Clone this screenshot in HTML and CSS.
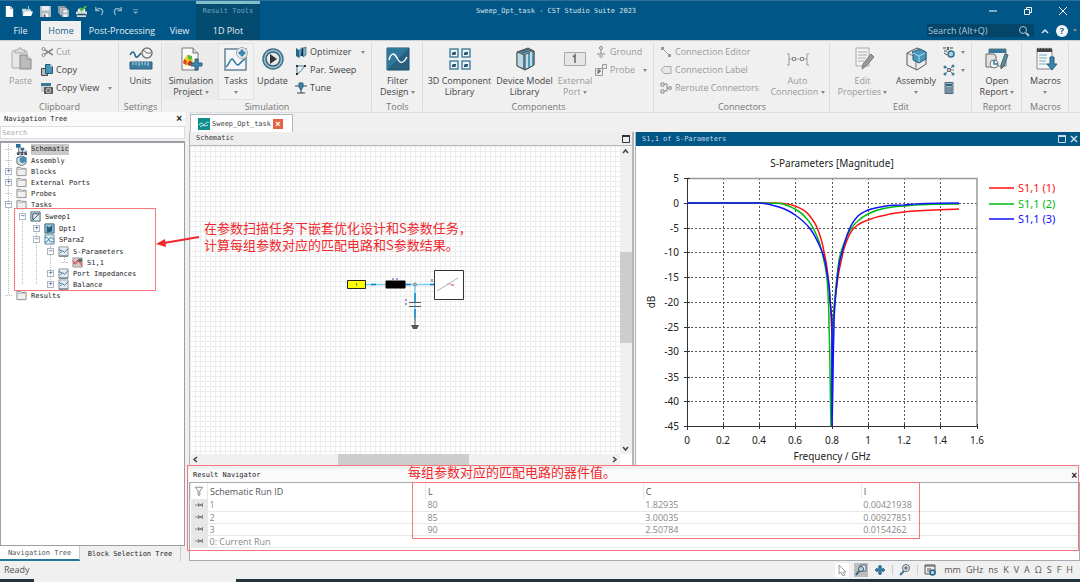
FILE: index.html
```html
<!DOCTYPE html>
<html lang="en">
  <head>
    <meta charset="UTF-8" />
    <meta name="viewport" content="width=device-width, initial-scale=1.0" />
    <title>Sweep_Opt_task - CST Studio Suite 2023</title>
    <link rel="stylesheet" href="styles.css">
  </head>
  <body>
    <svg class="sprites" aria-hidden="true">
      <symbol id="folder" viewBox="0 0 12 12">
        <path d="M1 10.500V1.500h4l1 1h5v8z" fill="#f0f0f0" stroke="#8a8a8a" />
        <path d="M1.500 3.500h9" stroke="#aaa" />
      </symbol>
      <symbol id="plot" viewBox="0 0 12 12">
        <path d="M1 1h10v10H1z" fill="#e4eaee" stroke="#8796a0" />
        <path d="M2 8l3-3 2 2 4-4M1 4l3 1" fill="none" stroke="#286f98" />
        <path d="M1 11h10" stroke="#4d6372" />
      </symbol>
      <symbol id="pin" viewBox="0 0 12 10">
        <path d="M2 5h3" stroke="#888" />
        <path d="M5 3h1v1h3V3h1v4H9V6H6v1H5z" fill="#888" />
      </symbol>
      <symbol id="chevron" viewBox="0 0 11 11">
        <path d="M4 3l3 2.500L4 8" fill="none" stroke="#444" stroke-width="1.500" />
      </symbol>
    </svg>

    <header class="app-header">
      <div class="title-row">
        <div class="quick-access">
          <button aria-label="New"><svg viewBox="0 0 12 12"><path d="M2 0h5l3 3v9H2z" fill="#fff" /><path d="M7 0v3h3" fill="none" stroke="#8aa" /></svg></button>
          <button aria-label="Open"><svg viewBox="0 0 12 12"><path d="M0 3h4l1 1h5v7H1z" fill="#c9d4da" /><path d="M3 6h9l-2 5H1z" fill="#fff" /><path d="M7 0v5M5 3l2 2 2-2" fill="none" stroke="#9ed4ec" /></svg></button>
          <button aria-label="Save"><svg viewBox="0 0 12 12"><path d="M0 0h12v12H0z" fill="#aebbc3" /><path d="M2 0h8v5H2z" fill="#e9edef" /><path d="M3 8h6v4H3z" fill="#f5f5f5" /><path d="M4 9h2v3H4z" fill="#667" /></svg></button>
          <button aria-label="Save all"><svg viewBox="0 0 12 12"><path d="M0 0h8v8H0z" fill="#8d9da7" /><path d="M2 2h8v8H2z" fill="#c9d1d6" stroke="#60717c" stroke-width=".5" /><path d="M4 4h8v8H4z" fill="#aebbc3" stroke="#60717c" stroke-width=".5" /><path d="M6 4h4v3H6zM6 9h4v3H6z" fill="#eee" /></svg></button>
          <button aria-label="Check"><svg viewBox="0 0 12 12"><path d="M2 3h8v4H2z" fill="#eee" /><path d="M0 6h12v3H0zM1 10h10v2H1z" fill="#d5dde1" /><path d="M2 9h8" stroke="#334" /><path d="M4 2l2 3 5-5" fill="none" stroke="#54b948" stroke-width="2" /></svg></button>
          <button aria-label="Undo"><svg viewBox="0 0 12 12"><path d="M2 1v4h4M2 5c4-5 10-1 6 5" fill="none" stroke="#8bb3ca" stroke-width="1.500" /></svg></button>
          <button aria-label="Redo"><svg viewBox="0 0 12 12"><path d="M10 1v4H6M10 5C6 0 0 4 4 10" fill="none" stroke="#8bb3ca" stroke-width="1.500" /></svg></button>
          <button class="narrow" aria-label="Customize"><svg viewBox="0 0 12 12"><path d="M3 4h6" stroke="#6fa0bd" /><path d="M3 6h6L6 9z" fill="#6fa0bd" /></svg></button>
        </div>
        <div class="context-label">Result Tools</div>
        <div class="window-title">Sweep_Opt_task - CST Studio Suite 2023</div>
        <div class="window-controls">
          <button aria-label="Minimize"><svg viewBox="0 0 12 12"><path d="M2 6h8" stroke="#fff" /></svg></button>
          <button aria-label="Restore"><svg viewBox="0 0 12 12"><path d="M2.500 4.500h5v5h-5zM4.500 4V2.500h5v5H8" fill="none" stroke="#fff" /></svg></button>
          <button aria-label="Close"><svg viewBox="0 0 12 12"><path d="M2 2l8 8M10 2l-8 8" stroke="#fff" /></svg></button>
        </div>
      </div>
      <div class="tab-row">
        <nav class="ribbon-tabs">
          <button>File</button>
          <button class="active">Home</button>
          <button>Post-Processing</button>
          <button>View</button>
          <button class="context">1D Plot</button>
        </nav>
        <div class="header-tools">
          <div class="ribbon-search">
            <input type="text" placeholder="Search (Alt+Q)" aria-label="Search commands" />
            <svg viewBox="0 0 12 12"><circle cx="5" cy="5" r="3.500" fill="none" stroke="#a9c4d3" /><path d="M8 8l3 3" stroke="#a9c4d3" stroke-width="2" /></svg>
          </div>
          <button aria-label="Collapse ribbon"><svg viewBox="0 0 12 12"><path d="M3 8l3-3 3 3" fill="none" stroke="#dbe7ee" stroke-width="1.500" /></svg></button>
          <button class="help" aria-label="Help">?</button>
          <i class="arrow"></i>
        </div>
      </div>
    </header>

    <div class="ribbon">
      <section class="group clipboard">
        <div class="group-body">
          <button class="big disabled">
            <svg viewBox="0 0 24 24"><rect x="3" y="4" width="15" height="17" rx="1" fill="#e6e6e6" stroke="#aaa" /><path d="M6 6V3h3l1-2h2l1 2h3v3z" fill="#ddd" stroke="#aaa" /><path d="M11 8h7l4 4v10H11z" fill="#bbb" stroke="#888" /><path d="M18 8v4h4" fill="#eee" stroke="#888" /></svg>
            <span>Paste</span>
          </button>
          <div class="stack">
            <button class="small disabled"><svg viewBox="0 0 12 12"><circle cx="2.500" cy="3" r="1.500" fill="none" stroke="#888" /><circle cx="2.500" cy="9" r="1.500" fill="none" stroke="#888" /><path d="M4 4l8 5M4 8l8-5" stroke="#888" stroke-width="1.500" /></svg>Cut</button>
            <button class="small"><svg viewBox="0 0 12 12"><path d="M.5 4.500h6v7h-6z" fill="#bbb" stroke="#444" /><path d="M4.500.5h5l2 2v7h-7z" fill="#4794b8" stroke="#235a78" /><path d="M9 0v3h3" fill="#def" stroke="#235a78" stroke-width=".5" /></svg>Copy</button>
            <button class="small"><svg viewBox="0 0 12 12"><path d="M0 1h10v9H0z" fill="#c9d2d7" /><path d="M0 1h10v3H0z" fill="#3e7898" /><rect x="3" y="5" width="9" height="7" rx="1" fill="#555" /><circle cx="7.500" cy="8.500" r="2.500" fill="#777" stroke="#ddd" stroke-width=".8" /></svg>Copy View<i class="arrow"></i></button>
          </div>
        </div>
        <h2>Clipboard</h2>
      </section>

      <section class="group settings">
        <div class="group-body">
          <button class="big">
            <svg viewBox="0 0 24 24"><path d="M1 8c2-4 4-4 5 0s3 2 6-2" fill="none" stroke="#246285" stroke-width="1.500" /><circle cx="18" cy="6" r="5" fill="#f5f5f5" stroke="#777" stroke-width="1.500" /><path d="M14 3l4 3h4" fill="none" stroke="#666" /><path d="M1 15h22v7H1z" fill="#3b7c9f" stroke="#286080" /><path d="M4 15v3M7 15v3M10 15v4M13 15v3M16 15v3M19 15v4" stroke="#b9dbe9" /></svg>
            <span>Units</span>
          </button>
        </div>
        <h2>Settings</h2>
      </section>

      <section class="group simulation">
        <div class="group-body">
          <button class="big shaded">
            <svg viewBox="0 0 24 24"><path d="M3 1h11l5 5v17H3z" fill="#fafafa" stroke="#777" /><path d="M14 1v5h5" fill="#ddd" stroke="#777" /><path d="M5 12l4-4 4 1 1 6-3 4-5-1z" fill="#f1d21c" /><path d="M5 12l3 2-1 4-3-2z" fill="#e1431c" /><path d="M8 8l5 1v3l-3 1z" fill="#52b848" /><path d="M11 13l3 3-3 3-3-2z" fill="#d73324" /><path d="M16 12h3v4h4v3h-4v4h-3v-4h-4v-3h4z" fill="#3c89ad" stroke="#245e7c" /></svg>
            <span>Simulation<br />Project <i class="arrow"></i></span>
          </button>
          <button class="big boxed">
            <svg viewBox="0 0 24 24"><path d="M1 2h21v21H1z" fill="#f2f6f8" stroke="#668392" stroke-width="1.500" /><path d="M2 20c3-2 4-8 6-8s4 7 6 6 3-4 7-6" fill="none" stroke="#31759a" stroke-width="1.500" /><circle cx="18" cy="6" r="5.500" fill="#eee" stroke="#aaa" /><path d="M17 3h2v2h2v2h-2v2h-2V7h-2V5h2z" fill="#3884aa" stroke="#3884aa" /></svg>
            <span>Tasks<br /><i class="arrow"></i></span>
          </button>
          <button class="big">
            <svg viewBox="0 0 24 24"><circle cx="12" cy="12" r="10" fill="#aebdc5" stroke="#3a7595" stroke-width="1.500" /><circle cx="12" cy="12" r="7" fill="#e8e8e8" stroke="#2d647f" stroke-width="1.500" /><path d="M9 7l7 5-7 5z" fill="#333" /></svg>
            <span>Update</span>
          </button>
          <div class="stack">
            <button class="small"><svg viewBox="0 0 12 12"><path d="M1 2l3 2v8l-3-2z" fill="#286485" /><path d="M4 4l3-3v8l-3 3z" fill="#4e9fc4" /><path d="M7 1l1 2v7H6z" fill="#225" /><path d="M8 2l3-1v8l-3 2z" fill="#78b6d1" stroke="#333" stroke-width=".5" /></svg>Optimizer<i class="arrow"></i></button>
            <button class="small"><svg viewBox="0 0 12 12"><path d="M2 11V2h8L2 11" fill="none" stroke="#497b94" /><path d="M1 1h2v2H1zM9 1h2v2H9zM1 9h2v2H1z" fill="#234" /></svg>Par. Sweep</button>
            <button class="small"><svg viewBox="0 0 12 12"><path d="M0 4h4M8 4h4M2 11h8M6 7v4" stroke="#345" /><path d="M4 1h4v4L6 8 4 5z" fill="#3d89ae" stroke="#245e7c" /></svg>Tune</button>
          </div>
        </div>
        <h2>Simulation</h2>
      </section>

      <section class="group tools">
        <div class="group-body">
          <button class="big">
            <svg viewBox="0 0 24 24"><path d="M1 1h22v22H1z" fill="#27617f" stroke="#18506e" /><path d="M1 1h22L1 23z" fill="#31799c" /><path d="M3 13c2-7 5-8 8-2s6 6 10-1" fill="none" stroke="#fff" stroke-width="1.500" /></svg>
            <span>Filter<br />Design <i class="arrow"></i></span>
          </button>
        </div>
        <h2>Tools</h2>
      </section>

      <section class="group components">
        <div class="group-body">
          <button class="big">
            <svg viewBox="0 0 24 24"><path d="M2 2h8v8H2zM14 2h8v8h-8zM2 14h8v8H2zM14 14h8v8h-8z" fill="#e9f2f5" stroke="#4a839f" stroke-width="1.500" /><path d="M5 5h3v2l-1 1H4V6zM17 5h3v2l-1 1h-3V6zM5 17h3v2l-1 1H4v-2zM17 17h3v2l-1 1h-3v-2z" fill="#285a73" /></svg>
            <span>3D Component<br />Library</span>
          </button>
          <button class="big">
            <svg viewBox="0 0 24 24"><path d="M4 5l11-4 6 3v14l-9 5-8-4z" fill="#65a8c5" stroke="#555" /><path d="M4 5l7 3v14l-7-3z" fill="#b9d9e6" stroke="#555" /><path d="M11 8l10-4v14l-9 5-1-1z" fill="#529abc" stroke="#555" /><path d="M14 7v14M18 5v14" stroke="#eee" stroke-width="1.500" /><path d="M6 5l10-3M9 6l10-3" stroke="#444" /></svg>
            <span>Device Model<br />Library</span>
          </button>
          <button class="big disabled">
            <svg viewBox="0 0 24 24"><path d="M1.500 5.500h21v13h-21z" fill="#e6e6e6" stroke="#aaa" /><path d="M10 10l2-2v8" fill="none" stroke="#666" stroke-width="1.500" /></svg>
            <span>External<br />Port <i class="arrow"></i></span>
          </button>
          <div class="stack">
            <button class="small disabled"><svg viewBox="0 0 12 12"><circle cx="6" cy="2" r="1.500" fill="none" stroke="#888" /><path d="M6 4v4M2 8h8M4 10h4M5 12h2" stroke="#888" /></svg>Ground</button>
            <button class="small disabled"><svg viewBox="0 0 12 12"><path d="M.5 4.500h7v7h-7zM7.500.5h4v4h-4z" fill="#eee" stroke="#999" /><path d="M3 10V6h2v2H3" fill="none" stroke="#555" /></svg>Probe<i class="arrow"></i></button>
          </div>
        </div>
        <h2>Components</h2>
      </section>

      <section class="group connectors">
        <div class="group-body">
          <div class="stack">
            <button class="small disabled"><svg viewBox="0 0 12 12"><path d="M2 2l7 7" stroke="#999" /><path d="M1 1h3v3H1zM8 8h3v3H8z" fill="#999" /></svg>Connection Editor</button>
            <button class="small disabled"><svg viewBox="0 0 12 12"><path d="M1 6l3-3.500h7v7H4z" fill="#e8e8e8" stroke="#aaa" /></svg>Connection Label</button>
            <button class="small disabled"><svg viewBox="0 0 12 12"><path d="M1 1h3v3H1zM1 8h3v3H1z" fill="none" stroke="#888" /><path d="M4 2h3v7H4M7 6h2" fill="none" stroke="#888" /><circle cx="10" cy="6" r="1.500" fill="none" stroke="#888" /></svg>Reroute Connectors</button>
          </div>
          <button class="big disabled">
            <svg viewBox="0 0 24 24"><path d="M1 7h2v11H1M23 7h-2v11h2M3 12h3M10 12h4M18 12h3" fill="none" stroke="#999" /><path d="M6.500 10.500h3v3h-3zM14.500 10.500h3v3h-3z" fill="#eee" stroke="#888" /></svg>
            <span>Auto<br />Connection <i class="arrow"></i></span>
          </button>
        </div>
        <h2>Connectors</h2>
      </section>

      <section class="group edit">
        <div class="group-body">
          <button class="big disabled">
            <svg viewBox="0 0 24 24"><path d="M5 1h13v18H5z" fill="#f3f3f3" stroke="#aaa" /><path d="M7 5h9M7 8h9M7 11h8M7 14h6" stroke="#aaa" /><path d="M20 7l3 3-8 9-4 3 1-5z" fill="#999" stroke="#777" /></svg>
            <span>Edit<br />Properties <i class="arrow"></i></span>
          </button>
          <button class="big">
            <svg viewBox="0 0 24 24"><path d="M3 6l10-5 9 4v12l-9 6-10-5z" fill="#ededed" stroke="#555" /><path d="M3 6l9 4v13" fill="none" stroke="#777" /><path d="M8 5l8-3 6 3v7l-7 4-6-3V6z" fill="#4894ba" stroke="#28617f" /><path d="M9 6l6 3v6M15 9l6-3" fill="none" stroke="#b4dbed" /></svg>
            <span>Assembly<br /><i class="arrow"></i></span>
          </button>
          <div class="stack">
            <button class="small" aria-label="Parameters"><svg viewBox="0 0 12 12"><path d="M0 2h3M4 1l2 3M6 1L4 4M7 2h3M1 5h3" stroke="#444" /><path d="M1 7l3 2" stroke="#444" /><circle cx="8" cy="8" r="3" fill="#a9d3e6" stroke="#2f6d8d" stroke-width="1.500" /></svg><i class="arrow"></i></button>
            <button class="small" aria-label="Network"><svg viewBox="0 0 12 12"><path d="M2 2l8 8M10 2l-8 8M6 6h5" stroke="#555" stroke-width=".75" /><circle cx="2" cy="3" r="1.500" fill="#357b9f" /><circle cx="10" cy="2" r="1.500" fill="#357b9f" /><circle cx="2" cy="10" r="1.500" fill="#357b9f" /><circle cx="10" cy="10" r="1.500" fill="#357b9f" /><circle cx="6" cy="6" r="1.500" fill="#eee" stroke="#555" /></svg><i class="arrow"></i></button>
            <button class="small" aria-label="Calculator"><svg viewBox="0 0 12 12"><path d="M2 .5h8v11H2z" fill="#9fb5c1" stroke="#567" /><path d="M3 2h6v2H3z" fill="#286485" /><path d="M3 6h6M3 8h6M3 10h6" stroke="#234e66" stroke-dasharray="1.500 .75" /></svg></button>
          </div>
        </div>
        <h2>Edit</h2>
      </section>

      <section class="group report">
        <div class="group-body">
          <button class="big">
            <svg viewBox="0 0 24 24"><path d="M4 2h17v17H4z" fill="#eee" stroke="#777" /><path d="M4 2h17v4H4z" fill="#387899" /><path d="M1 7h8l2 2v11H1z" fill="#e2e2e2" stroke="#666" /><circle cx="9" cy="17" r="4" fill="#f5f5f5" stroke="#777" /><path d="M9 13v4h4" fill="none" stroke="#357b9f" stroke-width="1.500" /><path d="M20 7l3 1-4 11-3 3v-4z" fill="#4b95b8" stroke="#555" /></svg>
            <span>Open<br />Report <i class="arrow"></i></span>
          </button>
        </div>
        <h2>Report</h2>
      </section>

      <section class="group macros">
        <div class="group-body">
          <button class="big">
            <svg viewBox="0 0 24 24"><path d="M3 2h15v20H3z" fill="#f7f7f7" stroke="#888" /><path d="M3 1h15v4H3z" fill="#444" /><path d="M5 0v2M8 0v2M11 0v2M14 0v2M17 0v2" stroke="#ccc" /><path d="M5 8h8M5 11h8M5 14h7M5 17h8" stroke="#76a9c0" /><path d="M16 10h4v7h3l-5 6-5-6h3z" fill="#3884aa" stroke="#245e7c" /></svg>
            <span>Macros<br /><i class="arrow"></i></span>
          </button>
        </div>
        <h2>Macros</h2>
      </section>
    </div>

    <main>
      <aside class="navigation">
        <div class="panel-header">Navigation Tree<button class="close" aria-label="Close navigation tree">×</button></div>
        <input class="tree-search" type="text" placeholder="Search" aria-label="Search tree" />
        <div class="tree">
          <ul>
            <li><div class="node"><i></i><svg viewBox="0 0 12 12"><path d="M0 0h5v4H0zM5 4h4v3H5z" fill="#286f98" /><path d="M3 4v5h8V7M7 7v3" fill="none" stroke="#555" /><path d="M1 9h3v3H1zM5 9h3v3H5zM9 9h3v3H9z" fill="#456" /></svg><span class="selected">Schematic</span></div></li>
            <li><div class="node"><i></i><svg viewBox="0 0 12 12"><path d="M1 3l5-2 5 2v6l-5 3-5-3z" fill="#ddd" stroke="#567" /><path d="M4 3l4-1 3 1v4L7 9 4 7z" fill="#3e8eb5" /></svg>Assembly</div></li>
            <li><div class="node"><button class="toggle" aria-label="Expand">+</button><svg><use href="#folder" /></svg>Blocks</div></li>
            <li><div class="node"><button class="toggle" aria-label="Expand">+</button><svg><use href="#folder" /></svg>External Ports</div></li>
            <li><div class="node"><i></i><svg><use href="#folder" /></svg>Probes</div></li>
            <li>
              <div class="node"><button class="toggle" aria-label="Collapse">−</button><svg><use href="#folder" /></svg>Tasks</div>
              <ul>
                <li>
                  <div class="node"><button class="toggle" aria-label="Collapse">−</button><svg viewBox="0 0 12 12"><path d="M1 1h10v10H1z" fill="#e4eef3" stroke="#2b5971" /><path d="M3 10V3h7L3 10" fill="none" stroke="#345" /></svg>Sweep1</div>
                  <ul>
                    <li><div class="node"><button class="toggle" aria-label="Expand">+</button><svg viewBox="0 0 12 12"><path d="M1 1h10v10H1z" fill="#a6cadb" stroke="#2b5971" /><path d="M3 3l3 2 3-3v7l-6 2z" fill="#245e7c" /></svg>Opt1</div></li>
                    <li>
                      <div class="node"><button class="toggle" aria-label="Collapse">−</button><svg viewBox="0 0 12 12"><path d="M1 1h10v10H1z" fill="#e4eef3" stroke="#5389a3" /><path d="M1 4c4-3 4 8 10 4M1 9c4 1 4-9 10-3" fill="none" stroke="#286f98" /></svg>SPara2</div>
                      <ul>
                        <li>
                          <div class="node"><button class="toggle" aria-label="Collapse">−</button><svg><use href="#plot" /></svg>S-Parameters</div>
                          <ul class="flush">
                            <li><div class="node"><i></i><svg viewBox="0 0 12 12"><path d="M1 1h10v10H1z" fill="#d9cccc" stroke="#999" /><path d="M1 4l3 4 3-4 4 6M1 8l6-5 4 4" fill="none" stroke="#d23c35" /><path d="M7 2h4v3H7z" fill="#466" /></svg>S1,1</div></li>
                          </ul>
                        </li>
                        <li><div class="node"><button class="toggle" aria-label="Expand">+</button><svg><use href="#plot" /></svg>Port Impedances</div></li>
                        <li><div class="node"><button class="toggle" aria-label="Expand">+</button><svg><use href="#plot" /></svg>Balance</div></li>
                      </ul>
                    </li>
                  </ul>
                </li>
              </ul>
            </li>
            <li><div class="node"><i></i><svg><use href="#folder" /></svg>Results</div></li>
          </ul>
        </div>
        <div class="bottom-tabs">
          <button class="active">Navigation Tree</button>
          <button>Block Selection Tree</button>
        </div>
      </aside>

      <div class="content">
        <div class="document-tabs">
          <div class="document-tab">
            <svg viewBox="0 0 12 12"><path d="M0 0h12v12H0z" fill="#0c8e8c" /><path d="M1 7c3-5 4 2 6-1s3-1 4-2M2 9c3-3 4 0 8-2" fill="none" stroke="#d5f3ef" /></svg>
            Sweep_Opt_task
            <button aria-label="Close tab">×</button>
          </div>
        </div>

        <div class="windows">
          <section class="window schematic">
            <div class="window-bar">Schematic
              <svg viewBox="0 0 12 12"><path d="M2.500 3.500h7v6h-7z" fill="none" stroke="#333" /><path d="M2 3h8" stroke="#333" stroke-width="2" /></svg>
            </div>
            <div class="canvas">
              <svg class="circuit" width="430" height="308" viewBox="0 0 430 308">
                <path d="M176 138.500h68M225 138.500v36" stroke="#7fcff5" stroke-width="1.500" />
                <path d="M181 138.500h5M215 138.500h6M240 138.500h5M225 147v9M225 163v8" stroke="#0787cf" stroke-width="1.500" />
                <path d="M157.500 134.500h18v8h-18z" fill="#ff0" stroke="#222" />
                <path d="M166.500 137v3" stroke="#775" />
                <path d="M196 135h19v7h-19z" fill="#000" stroke="#000" />
                <path d="M203 132v2M206 133h2M216 153v2M216 157v2" stroke="#3636a8" />
                <path d="M219 156.500h12M219 160.500h12" stroke="#555" />
                <circle cx="225" cy="138.500" r="1.500" fill="#bbb" stroke="#789" />
                <path d="M242 136v-3" stroke="#555" />
                <path d="M225 171v8" stroke="#555" />
                <path d="M221 179h8l-2 4h-4z" fill="#555" />
                <path d="M244.500 124.500h29v29h-29z" fill="#fff" stroke="#333" />
                <path d="M247 145l21-13M257 138h4" stroke="#999" stroke-width=".75" />
                <path d="M261 139h3" stroke="#d33" />
              </svg>
            </div>
            <div class="scroll-y"><svg class="up"><use href="#chevron" /></svg><i></i><svg class="down"><use href="#chevron" /></svg></div>
            <div class="scroll-x"><svg class="left"><use href="#chevron" /></svg><i></i><svg class="right"><use href="#chevron" /></svg></div>
          </section>

          <section class="window active">
            <div class="window-bar">S1,1 of S-Parameters
              <svg viewBox="0 0 12 12"><path d="M2.500 3.500h7v6h-7z" fill="none" stroke="#cde" /><path d="M2 3h8" stroke="#cde" stroke-width="2" /></svg>
              <svg viewBox="0 0 12 12"><path d="M3 3l6 6M9 3l-6 6" stroke="#cde" stroke-width="1.500" /></svg>
            </div>
            <svg class="chart" viewBox="0 0 444 319">
              <text class="caption" x="196" y="21">S-Parameters [Magnitude]</text>
              <g class="grid">
                <path d="M87.500 32v248M123.500 32v248M159.500 32v248M196.500 32v248M232.500 32v248M268.500 32v248M304.500 32v248" />
                <path d="M51 57.500h290M51 82.500h290M51 106.500h290M51 131.500h290M51 156.500h290M51 181.500h290M51 205.500h290M51 231.500h290M51 255.500h290" />
              </g>
              <path d="M51 32.500h290v248" fill="none" stroke="#999" stroke-width="1.500" />
              <path d="M51.500 32v252M48 280.500h293" stroke="#333" />
              <path d="M48 32.500h6M48 57.500h6M48 82.500h6M48 106.500h6M48 131.500h6M48 156.500h6M48 181.500h6M48 205.500h6M48 231.500h6M48 255.500h6M87.500 278v5M123.500 278v5M159.500 278v5M196.500 278v5M232.500 278v5M268.500 278v5M304.500 278v5M341.500 278v5" stroke="#333" />
              <g class="curves">
                <path stroke="#f11" d="M51 57H132C144 57 152 57 159 60C166 63 169 64 173 69C178 75 180 78 182 84C185 92 187 99 188 106C190 114 191 121 192 130C193 141 195 160 196 190V225V190C197 170 200 145 202 131C204 118 206 113 207 106C209 99 211 92 215 86C219 79 226 76 232 74C239 71 244 70 250 69C256 67 261 67 268 66C286 64 305 64 323 63" />
                <path stroke="#0b1" d="M51 57H123C134 57 142 57 147 58C154 60 155 61 159 63C164 66 167 68 170 72C175 77 177 81 180 88C184 96 185 103 187 110C189 118 190 124 191 132C192 145 193 162 193 180C194 202 194 240 195 280C196 240 196 200 197 178C198 160 200 136 203 114C205 104 209 94 213 86C216 81 218 78 222 75C225 72 228 70 232 68C238 65 244 63 250 62C256 61 261 60 268 60C287 58 305 58 323 58" />
                <path stroke="#11f" d="M51 57H123C130 57 137 59 143 61C149 63 154 65 159 69C165 73 170 77 175 84C180 91 182 96 185 103C188 110 190 118 191 127C193 137 194 145 194 154C195 163 196 171 196 181V280C197 245 197 210 198 180C198 167 199 157 200 145C201 134 202 124 204 114C207 103 209 94 213 84C216 77 218 74 222 70C225 67 228 66 232 64C238 62 244 61 250 60C256 59 262 59 268 59C286 57 305 57 323 57" />
              </g>
              <g class="labels end">
                <text x="43" y="36">5</text><text x="43" y="61">0</text><text x="43" y="86">-5</text><text x="43" y="110">-10</text><text x="43" y="135">-15</text><text x="43" y="160">-20</text><text x="43" y="185">-25</text><text x="43" y="209">-30</text><text x="43" y="235">-35</text><text x="43" y="259">-40</text><text x="43" y="284">-45</text>
              </g>
              <g class="labels">
                <text x="51" y="298">0</text><text x="87" y="298">0.2</text><text x="123" y="298">0.4</text><text x="159" y="298">0.6</text><text x="196" y="298">0.8</text><text x="232" y="298">1</text><text x="268" y="298">1.2</text><text x="304" y="298">1.4</text><text x="341" y="298">1.6</text>
              </g>
              <text class="caption" x="196" y="314">Frequency / GHz</text>
              <text class="caption" transform="translate(19 156) rotate(-90)">dB</text>
              <g class="legend">
                <path d="M353 42h25" stroke="#f11" /><text x="382" y="46" fill="#f11">S1,1 (1)</text>
                <path d="M353 58h25" stroke="#0b1" /><text x="382" y="62" fill="#0b1">S1,1 (2)</text>
                <path d="M353 73h25" stroke="#11f" /><text x="382" y="77" fill="#11f">S1,1 (3)</text>
              </g>
            </svg>
          </section>
        </div>

        <section class="results">
          <div class="panel-header">Result Navigator<button class="close" aria-label="Close result navigator">×</button></div>
          <div class="table-area">
            <table>
              <thead>
                <tr><th class="pin"><svg viewBox="0 0 12 12"><path d="M1.500 1.500h9L7 6v5H5V6z" fill="none" stroke="#777" /></svg></th><th>Schematic Run ID</th><th>L</th><th>C</th><th>I</th></tr>
              </thead>
              <tbody>
                <tr><td class="pin"><svg><use href="#pin" /></svg></td><td>1</td><td>80</td><td>1.82935</td><td>0.00421938</td></tr>
                <tr><td class="pin"><svg><use href="#pin" /></svg></td><td>2</td><td>85</td><td>3.00035</td><td>0.00927851</td></tr>
                <tr><td class="pin"><svg><use href="#pin" /></svg></td><td>3</td><td>90</td><td>2.50784</td><td>0.0154262</td></tr>
                <tr><td class="pin"><svg><use href="#pin" /></svg></td><td>0: Current Run</td><td></td><td></td><td></td></tr>
              </tbody>
            </table>
          </div>
          <div class="mark mark-results"></div>
          <div class="mark mark-values"></div>
          <p class="note note-results" lang="zh">每组参数对应的匹配电路的器件值。</p>
        </section>
      </div>

      <div class="mark mark-tasks"></div>
      <svg class="note-arrow" viewBox="0 0 44 14"><path d="M43 3L8 9" stroke="#f0282d" stroke-width="2" /><path d="M0 10l9-5 1 8z" fill="#f0282d" /></svg>
      <p class="note note-tasks" lang="zh">在参数扫描任务下嵌套优化设计和S参数任务，<br />计算每组参数对应的匹配电路和S参数结果。</p>
    </main>

    <footer class="status-bar">
      <span class="ready">Ready</span>
      <button class="light" aria-label="Select"><svg viewBox="0 0 12 12"><path d="M3 1v9l2-2 2 4 2-1-2-3h3z" fill="#fff" stroke="#999" /></svg></button>
      <button class="pressed" aria-label="Zoom"><svg viewBox="0 0 12 12"><path d="M5 1h6v6H5z" fill="#dde7ec" stroke="#567" /><circle cx="6" cy="5" r="2.500" fill="#b5d4e2" stroke="#456" /><path d="M4 7l-3 4" stroke="#286485" stroke-width="2" /></svg></button>
      <button aria-label="Pan"><svg viewBox="0 0 12 12"><path d="M6 1l2 2H7v2h2V4l2 2-2 2V7H7v2h1l-2 2-2-2h1V7H3v1L1 6l2-2v1h2V3H4z" fill="#37789a" stroke="#37789a" /></svg></button>
      <i class="divider"></i>
      <button aria-label="Fit"><svg viewBox="0 0 12 12"><circle cx="7" cy="4" r="3.500" fill="#e8f0f4" stroke="#666" /><path d="M5 4h4M7 2v4" stroke="#456" /><path d="M5 7l-4 4" stroke="#37789a" stroke-width="2" /></svg></button>
      <i class="divider"></i>
      <button aria-label="Unit settings"><svg viewBox="0 0 12 12"><path d="M1 1h10v9H1z" fill="#eee" stroke="#555" /><path d="M1 2h10M3 5h4M3 7h3" stroke="#555" /><circle cx="8.500" cy="8.500" r="2.500" fill="#b5d4e2" stroke="#286485" stroke-width="1.500" /></svg></button>
      <span class="first-unit">mm</span><span>GHz</span><span>ns</span><span>K</span><span>V</span><span>A</span><span>Ω</span><span>S</span><span>F</span><span>H</span>
    </footer>
    <div class="taskbar"><i></i></div>
  </body>
</html>
```
FILE: styles.css
```css
* {
  box-sizing: border-box;
}
body {
  margin: 0;
  min-height: 100vh;
  display: flex;
  flex-direction: column;
  background-color: #f0f0f0;
  color: #444;
  font-family: "Open Sans", "Noto Sans", sans-serif;
  font-size: 9px;
  line-height: 12px;
}
button,
input {
  font: inherit;
  color: inherit;
  border: none;
  background: none;
  padding: 0;
  margin: 0;
}
button {
  white-space: nowrap;
}
svg {
  width: 12px;
  height: 12px;
  flex: none;
  display: block;
}
ul {
  list-style: none;
  margin: 0;
  padding: 0;
}
.sprites {
  display: none;
}
.arrow {
  border: 2px solid transparent;
  border-top: 3px solid #888;
  border-bottom: none;
  display: inline-block;
  vertical-align: middle;
}

/* header */
.app-header {
  background-color: #005686;
  color: #e6eff4;
  border-top: 1px solid #2c7199;
}
.title-row {
  display: grid;
  grid-template-columns: 196px 64px 1fr 228px;
  height: 20px;
  font: 7px/20px "DejaVu Sans Mono", monospace;
}
.quick-access {
  display: flex;
  align-items: center;
}
.quick-access button {
  width: 18px;
  display: flex;
  justify-content: center;
}
.quick-access svg {
  width: 11px;
  height: 11px;
}
.context-label {
  background-color: #044b70;
  border-top: 3px solid #83bfcb;
  color: #70a8c2;
  line-height: 15px;
  text-align: center;
}
.window-title {
  text-align: center;
  color: #d4e3ec;
}
.window-controls {
  display: flex;
  justify-content: flex-end;
}
.window-controls button {
  width: 35px;
  display: flex;
  align-items: center;
  justify-content: center;
}
.tab-row {
  display: flex;
  justify-content: space-between;
  height: 19px;
}
.ribbon-tabs {
  display: grid;
  grid-template-columns: 41px 40px 82px 33px 64px;
}
.ribbon-tabs .active {
  background-color: #f0f0f0;
  color: #145d86;
}
.ribbon-tabs .context {
  background-color: #044b70;
}
.header-tools {
  display: flex;
  align-items: center;
  gap: 5px;
  padding-right: 3px;
}
.ribbon-search {
  display: flex;
  align-items: center;
  width: 107px;
  height: 13px;
  padding: 0 4px 0 1px;
  background-color: #04456a;
}
.ribbon-search input {
  flex: 1;
  min-width: 0;
}
.ribbon-search input::placeholder {
  color: #b0c7d4;
}
.help {
  width: 12px;
  height: 12px;
  border-radius: 50%;
  background-color: #f3f7f9;
  color: #1e6088;
  font-weight: bold;
  line-height: 12px;
}

/* ribbon */
.ribbon {
  display: grid;
  grid-template-columns: 119px 43px 210px 51px 231px 176px 142px 50px 47px;
  height: 72px;
  border-top: 1px solid #c5ced3;
}
.group {
  display: flex;
  flex-direction: column;
  position: relative;
}
.group::after {
  content: "";
  position: absolute;
  right: 0;
  top: 2px;
  bottom: 2px;
  border-right: 1px solid #dadada;
}
.group h2 {
  margin: 0;
  font-size: 9px;
  font-weight: normal;
  line-height: 13px;
  color: #777;
  text-align: center;
}
.group-body {
  display: grid;
  height: 59px;
  padding-top: 2px;
}
.clipboard .group-body {
  grid-template-columns: 41px 1fr;
}
.simulation .group-body {
  grid-template-columns: 54px 36px 37px 1fr;
  padding-left: 2px;
}
.simulation .stack {
  padding-left: 4px;
}
.components .group-body {
  grid-template-columns: 69px 61px 40px 1fr;
  padding-left: 2px;
}
.connectors .group-body {
  grid-template-columns: 105px 1fr;
  padding-left: 6px;
}
.edit .group-body {
  grid-template-columns: 65px 42px 1fr;
}
.edit .stack {
  padding-left: 6px;
}
.big {
  display: flex;
  flex-direction: column;
  align-items: center;
  gap: 4px;
  padding-top: 4px;
  line-height: 11px;
  min-width: 0;
}
.big svg {
  width: 24px;
  height: 24px;
}
.shaded {
  background-color: #ebebeb;
}
.boxed {
  border: 1px solid #e2e2e2;
  padding-top: 3px;
  background-color: #f2f2f2;
}
.stack {
  display: flex;
  flex-direction: column;
}
.small {
  display: flex;
  align-items: center;
  gap: 3px;
  height: 18px;
}
.small .arrow {
  margin-left: auto;
  margin-right: 7px;
}
.disabled {
  color: #999;
}

/* main area */
main {
  flex: 1;
  display: flex;
  gap: 4px;
  position: relative;
}
.navigation {
  width: 185px;
  display: flex;
  flex-direction: column;
  font: 7px/14px "DejaVu Sans Mono", monospace;
  color: #222;
}
.panel-header {
  display: flex;
  justify-content: space-between;
  align-items: center;
  height: 14px;
  padding: 0 3px 0 4px;
  background-color: #fafafa;
}
.close {
  font: bold 10px/12px "Liberation Sans", sans-serif;
}
.tree-search {
  height: 13px;
  padding-left: 1px;
  background-color: #fff;
  border: 1px solid #ddd;
}
.tree-search::placeholder {
  color: #aaa;
}
.tree {
  flex: 1;
  margin-top: 2px;
  padding: 1px 0 0 3px;
  background-color: #fff;
  border: 1px solid #9a9fa5;
  border-top-width: 2px;
}
.tree ul {
  position: relative;
}
.tree ul::before {
  content: "";
  position: absolute;
  left: 4px;
  top: 0;
  bottom: 6px;
  border-left: 1px dotted #bbb;
}
.tree ul ul {
  margin-top: 1px;
  padding-left: 14px;
}
.tree ul ul::before {
  left: 18px;
}
.tree ul .flush {
  margin-top: 0;
}
.node {
  display: flex;
  align-items: center;
  height: 11px;
  gap: 4px;
  padding-left: 1px;
  position: relative;
}
.node > i {
  width: 7px;
  height: 1px;
  border-top: 1px dotted #bbb;
}
.node svg {
  width: 11px;
  height: 11px;
}
.toggle {
  width: 7px;
  height: 7px;
  border: 1px solid #abb6c4;
  background-color: #fff;
  color: #348;
  font-size: 7px;
  line-height: 5px;
}
.selected {
  background-color: #c9c9c9;
  line-height: 11px;
}
.bottom-tabs {
  display: flex;
  height: 15px;
}
.bottom-tabs button {
  width: 101px;
  padding: 0 7px;
  border-right: 1px solid #ccc;
}
.bottom-tabs .active {
  width: 80px;
  background-color: #fff;
  color: #555;
  border-bottom: 2px solid #24749b;
}

.content {
  flex: 1;
  min-width: 0;
  display: flex;
  flex-direction: column;
}
.document-tabs {
  height: 20px;
  padding: 1px 0 0 1px;
  border-top: 1px solid #ddd;
}
.document-tab {
  display: flex;
  align-items: center;
  justify-content: center;
  gap: 2px;
  width: 103px;
  height: 18px;
  padding-right: 2px;
  border: 1px solid #b3b8bc;
  border-bottom: none;
  background-color: #fff;
  font: 7px/18px "DejaVu Sans Mono", monospace;
}
.document-tab button {
  width: 10px;
  height: 10px;
  background-color: #e36244;
  color: #fff;
  font: bold 9px/10px "Liberation Sans", sans-serif;
}
.windows {
  flex: 1;
  display: grid;
  grid-template-columns: 1fr 1fr;
  gap: 1px;
}
.window {
  display: flex;
  flex-direction: column;
  border-left: 1px solid #b3b8bc;
  background-color: #fff;
}
.window-bar {
  display: flex;
  align-items: center;
  height: 14px;
  padding-left: 6px;
  font: 7px/13px "DejaVu Sans Mono", monospace;
  color: #333;
  background-color: #eee;
  border-bottom: 1px solid #b3b8bc;
}
.window-bar svg:first-of-type {
  margin-left: auto;
}
.active .window-bar {
  background-color: #005686;
  color: #c4dae6;
  border: none;
}
.schematic {
  display: grid;
  grid-template: 14px 1fr 11px / 1fr 12px;
  border-right: 2px solid #b3b8bc;
}
.schematic .window-bar {
  grid-column: 1 / 3;
}
.canvas {
  position: relative;
  background-image: linear-gradient(#ededed 1px, transparent 1px),
    linear-gradient(90deg, #ededed 1px, transparent 1px);
  background-size: 5px 5px;
}
.circuit {
  position: absolute;
  width: 430px;
  height: 308px;
}
.scroll-y,
.scroll-x {
  display: grid;
  background-color: #f0f0f0;
}
.scroll-y svg,
.scroll-x svg {
  width: 11px;
  height: 11px;
}
.scroll-y {
  grid-template-rows: 11px 95px 91px 1fr 11px;
}
.scroll-y i {
  grid-row: 3;
  background-color: #cdcdcd;
}
.scroll-x {
  grid-template-columns: 11px 137px 131px 1fr 11px;
}
.scroll-x i {
  grid-column: 3;
  background-color: #cdcdcd;
}
.up {
  transform: rotate(-90deg);
}
.down {
  grid-row: 5;
  transform: rotate(90deg);
}
.left {
  transform: rotate(180deg);
}
.right {
  grid-column: 5;
}
.chart {
  width: 100%;
  height: auto;
  font-family: "Noto Sans", sans-serif;
  fill: #222;
}
.chart .caption {
  font-size: 10px;
  text-anchor: middle;
}
.labels {
  font-size: 10px;
  text-anchor: middle;
}
.labels.end {
  text-anchor: end;
}
.grid {
  stroke: #555;
  stroke-dasharray: 2 2;
}
.curves {
  fill: none;
  stroke-width: 1.5px;
}
.legend {
  font-size: 11px;
  stroke-width: 1.5px;
}
.legend text {
  stroke: none;
}

/* results */
.results {
  position: relative;
  padding-top: 4px;
}
.results .panel-header {
  font: 7px/13px "DejaVu Sans Mono", monospace;
  color: #222;
  height: 13px;
}
.table-area {
  height: 79px;
  background-color: #fff;
  border: 1px solid #a6abb2;
}
table {
  width: 100%;
  table-layout: fixed;
  border-collapse: collapse;
}
th,
td {
  height: 12px;
  padding: 0 0 0 2px;
  line-height: 11px;
  font-weight: normal;
  text-align: left;
  color: #888;
  border-bottom: 1px solid #e8e8e8;
}
th {
  height: 16px;
  color: #555;
  border-bottom: none;
  border-left: 1px solid #e8e8e8;
}
.pin {
  width: 17px;
}
td.pin {
  background-color: #e6e6e6;
}
.pin svg {
  height: 10px;
}

/* annotations */
.mark {
  position: absolute;
  border: 1px solid #f5787b;
  pointer-events: none;
}
.mark-tasks {
  left: 14px;
  top: 96px;
  width: 142px;
  height: 83px;
}
.mark-results {
  left: -2px;
  right: 1px;
  top: 0;
  height: 86px;
}
.mark-values {
  left: 223px;
  right: 160px;
  top: 17px;
  height: 57px;
}
.note {
  position: absolute;
  margin: 0;
  color: #f0282d;
  font: 13px/17px "Noto Sans CJK SC", sans-serif;
  white-space: nowrap;
}
.note-tasks {
  left: 204px;
  top: 107px;
}
.note-results {
  left: 219px;
  top: -2px;
}
.note-arrow {
  position: absolute;
  left: 156px;
  top: 122px;
  width: 44px;
  height: 14px;
}

/* status bar */
.status-bar {
  display: flex;
  align-items: center;
  gap: 5px;
  height: 18px;
  padding: 0 7px 0 4px;
  color: #555;
}
.ready {
  margin-right: auto;
}
.status-bar button {
  padding: 1px;
}
.light {
  background-color: #fff;
}
.status-bar .pressed {
  background-color: #bdbdbd;
}
.first-unit {
  margin-left: 2px;
}
.divider {
  height: 10px;
  border-left: 1px solid #ccc;
}
.taskbar {
  height: 3px;
  background-color: #22343d;
}
.taskbar i {
  display: block;
  width: 202px;
  height: 3px;
  margin-left: 34px;
  background-color: #f0f0f0;
}
```
